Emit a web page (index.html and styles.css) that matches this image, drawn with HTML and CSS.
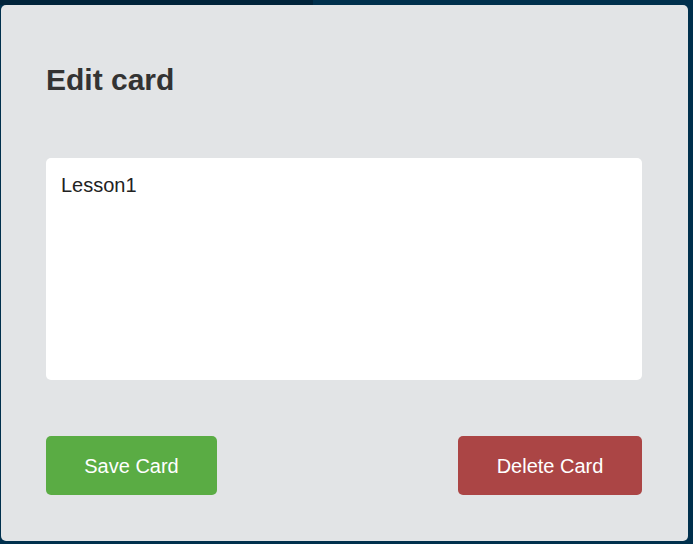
FILE: index.html
```html
<!DOCTYPE html>
<html>
<head>
<meta charset="utf-8">
<link rel="stylesheet" href="styles.css">
</head>
<body>
<div class="topbar"></div>
<div class="modal">
  <h2 class="modal-title">Edit card</h2>
  <textarea class="card-text">Lesson1</textarea>
  <div class="actions">
    <button class="btn btn-save">Save Card</button>
    <button class="btn btn-delete">Delete Card</button>
  </div>
</div>
</body>
</html>
```
FILE: styles.css
```css
html, body {
  margin: 0;
  padding: 0;
}
body {
  background: #00304d;
  width: 693px;
  height: 544px;
  overflow: hidden;
  font-family: "Liberation Sans", Arial, sans-serif;
}
.topbar {
  width: 313px;
  height: 5px;
  background: #00233a;
}
.modal {
  margin-left: 1px;
  width: 687px;
  height: 536px;
  box-sizing: border-box;
  padding: 58px 46px 0 45px;
  background: #e2e4e6;
  border-radius: 5px;
  display: flex;
  flex-direction: column;
}
.modal-title {
  margin: 0;
  font-size: 30px;
  line-height: 34px;
  font-weight: bold;
  color: #333333;
}
.card-text {
  margin-top: 61px;
  height: 222px;
  box-sizing: border-box;
  border: none;
  border-radius: 5px;
  background: #ffffff;
  padding: 16px 15px 15px;
  font-family: "Liberation Sans", Arial, sans-serif;
  font-size: 20px;
  line-height: 23px;
  color: #222222;
  resize: none;
  outline: none;
}
.actions {
  margin-top: 56px;
  display: flex;
  justify-content: space-between;
}
.btn {
  height: 59px;
  padding: 1px 0 0;
  white-space: nowrap;
  border: none;
  border-radius: 5px;
  color: #ffffff;
  font-family: "Liberation Sans", Arial, sans-serif;
  font-size: 20px;
}
.btn-save {
  width: 171px;
  background: #5aac44;
}
.btn-delete {
  width: 184px;
  background: #ab4545;
}
```
